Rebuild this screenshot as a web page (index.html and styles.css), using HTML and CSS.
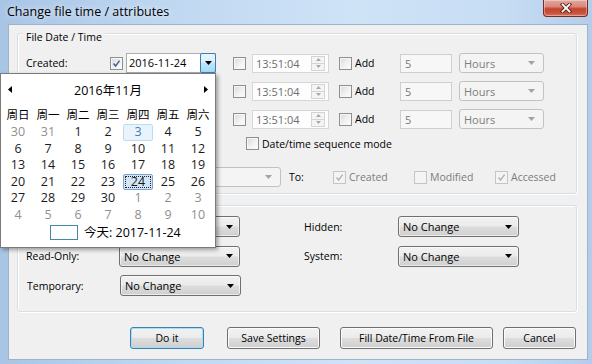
FILE: index.html
```html
<!DOCTYPE html>
<html>
<head>
<meta charset="utf-8">
<link rel="stylesheet" href="styles.css">
</head>
<body>
<div class="window">
  <div class="titlebar">
    <span class="title">Change file time / attributes</span>
    <div class="close">
      <svg width="14" height="10" viewBox="0 0 14 10"><path d="M3.5 1.5 L10.5 8.5 M10.5 1.5 L3.5 8.5" stroke="#5a1d16" stroke-width="3.6" stroke-linecap="square"/><path d="M3.5 1.5 L10.5 8.5 M10.5 1.5 L3.5 8.5" stroke="#fff" stroke-width="1.8" stroke-linecap="square"/></svg>
    </div>
  </div>
  <div class="frame">
    <div class="client">
      <div class="group g1">
        <div class="caption">File Date / Time</div>

        <div class="dtrow first">
          <span class="lbl">Created:</span>
          <span class="cb on"><svg viewBox="0 0 11 11"><path d="M2.5 5.5 L4.6 8 L8.6 2.6"/></svg></span>
          <div class="date"><span class="dtext">2016-11-24</span><span class="dbtn hot"><svg width="7" height="4" viewBox="0 0 7 4"><path d="M0 0H7L3.5 4Z"/></svg></span></div>
          <span class="cb mid"></span>
          <div class="time"><span>13:51:04</span><span class="spin"><span class="sp"><svg width="5" height="3" viewBox="0 0 5 3"><path d="M0 3H5L2.5 0Z"/></svg></span><span class="sp"><svg width="5" height="3" viewBox="0 0 5 3"><path d="M0 0H5L2.5 3Z"/></svg></span></span></div>
          <span class="cb add-cb"></span><span class="add">Add</span>
          <div class="num">5</div>
          <div class="combo dis"><span>Hours</span><svg width="7" height="4" viewBox="0 0 7 4"><path d="M0 0H7L3.5 4Z"/></svg></div>
        </div>

        <div class="dtrow">
          <span class="lbl"></span>
          <span class="cb on"></span>
          <div class="date"><span class="dtext"></span><span class="dbtn"></span></div>
          <span class="cb mid"></span>
          <div class="time"><span>13:51:04</span><span class="spin"><span class="sp"><svg width="5" height="3" viewBox="0 0 5 3"><path d="M0 3H5L2.5 0Z"/></svg></span><span class="sp"><svg width="5" height="3" viewBox="0 0 5 3"><path d="M0 0H5L2.5 3Z"/></svg></span></span></div>
          <span class="cb add-cb"></span><span class="add">Add</span>
          <div class="num">5</div>
          <div class="combo dis"><span>Hours</span><svg width="7" height="4" viewBox="0 0 7 4"><path d="M0 0H7L3.5 4Z"/></svg></div>
        </div>

        <div class="dtrow">
          <span class="lbl"></span>
          <span class="cb on"></span>
          <div class="date"><span class="dtext"></span><span class="dbtn"></span></div>
          <span class="cb mid"></span>
          <div class="time"><span>13:51:04</span><span class="spin"><span class="sp"><svg width="5" height="3" viewBox="0 0 5 3"><path d="M0 3H5L2.5 0Z"/></svg></span><span class="sp"><svg width="5" height="3" viewBox="0 0 5 3"><path d="M0 0H5L2.5 3Z"/></svg></span></span></div>
          <span class="cb add-cb"></span><span class="add">Add</span>
          <div class="num">5</div>
          <div class="combo dis"><span>Hours</span><svg width="7" height="4" viewBox="0 0 7 4"><path d="M0 0H7L3.5 4Z"/></svg></div>
        </div>

        <div class="seqrow">
          <span class="cb"></span><span class="cbtext">Date/time sequence mode</span>
        </div>

        <div class="torow">
          <span class="lbl"></span>
          <div class="combo dis wide"><span></span><svg width="7" height="4" viewBox="0 0 7 4"><path d="M0 0H7L3.5 4Z"/></svg></div>
          <span class="to">To:</span>
          <span class="chk"><span class="cb dis on"><svg viewBox="0 0 11 11"><path d="M2.5 5.5 L4.6 8 L8.6 2.6"/></svg></span><span class="cbtext gray">Created</span></span>
          <span class="chk"><span class="cb dis"></span><span class="cbtext gray">Modified</span></span>
          <span class="chk"><span class="cb dis on"><svg viewBox="0 0 11 11"><path d="M2.5 5.5 L4.6 8 L8.6 2.6"/></svg></span><span class="cbtext gray">Accessed</span></span>
        </div>
      </div>

      <div class="group g2">
        <div class="caption blank"></div>
        <div class="attrs">
          <span class="lbl"></span>
          <div class="combo"><span></span><svg width="7" height="4" viewBox="0 0 7 4"><path d="M0 0H7L3.5 4Z"/></svg></div>
          <span></span>
          <span class="lbl">Hidden:</span>
          <div class="combo"><span>No Change</span><svg width="7" height="4" viewBox="0 0 7 4"><path d="M0 0H7L3.5 4Z"/></svg></div>

          <span class="lbl">Read-Only:</span>
          <div class="combo"><span>No Change</span><svg width="7" height="4" viewBox="0 0 7 4"><path d="M0 0H7L3.5 4Z"/></svg></div>
          <span></span>
          <span class="lbl">System:</span>
          <div class="combo"><span>No Change</span><svg width="7" height="4" viewBox="0 0 7 4"><path d="M0 0H7L3.5 4Z"/></svg></div>

          <span class="lbl temp">Temporary:</span>
          <div class="combo temp"><span>No Change</span><svg width="7" height="4" viewBox="0 0 7 4"><path d="M0 0H7L3.5 4Z"/></svg></div>
        </div>
      </div>

      <div class="buttons">
        <button class="btn default b1">Do it</button>
        <button class="btn b2">Save Settings</button>
        <button class="btn b3">Fill Date/Time From File</button>
        <button class="btn b4">Cancel</button>
      </div>
    </div>
  </div>

  <div class="cal">
    <div class="cal-head">
      <svg width="4" height="7" viewBox="0 0 4 7"><path d="M4 0V7L0 3.5Z"/></svg>
      <span class="cal-title">2016年11月</span>
      <svg width="4" height="7" viewBox="0 0 4 7"><path d="M0 0V7L4 3.5Z"/></svg>
    </div>
    <div class="cal-week">
      <span>周日</span><span>周一</span><span>周二</span><span>周三</span><span>周四</span><span>周五</span><span>周六</span>
    </div>
    <div class="cal-days">
      <span class="o">30</span><span class="o">31</span><span>1</span><span>2</span><span class="hl">3</span><span>4</span><span>5</span>
      <span>6</span><span>7</span><span>8</span><span>9</span><span>10</span><span>11</span><span>12</span>
      <span>13</span><span>14</span><span>15</span><span>16</span><span>17</span><span>18</span><span>19</span>
      <span>20</span><span>21</span><span>22</span><span>23</span><span class="sel">24</span><span>25</span><span>26</span>
      <span>27</span><span>28</span><span>29</span><span>30</span><span class="o">1</span><span class="o">2</span><span class="o">3</span>
      <span class="o">4</span><span class="o">5</span><span class="o">6</span><span class="o">7</span><span class="o">8</span><span class="o">9</span><span class="o">10</span>
    </div>
    <div class="cal-today"><span class="todaybox"></span><span class="todaytext">今天: 2017-11-24</span></div>
  </div>
</div>
</body>
</html>
```
FILE: styles.css
```css
* { box-sizing: border-box; }
html, body { margin: 0; padding: 0; }
body {
  width: 592px;
  height: 364px;
  overflow: hidden;
  font-family: "Open Sans", "Noto Sans", sans-serif;
  font-size: 10.5px;
  color: #000;
}
.window {
  position: relative;
  width: 592px;
  height: 364px;
  display: flex;
  flex-direction: column;
  background: linear-gradient(to right, #a8c5e6 0%, #bdd6f0 25%, #cfe3f7 60%, #c7ddf4 85%, #b3cdea 100%);
}
.titlebar {
  height: 24px;
  display: flex;
  align-items: flex-start;
  padding: 0 4px 0 7px;
}
.title {
  font-size: 12.5px;
  line-height: 24px;
  color: #000;
  text-shadow: 0 0 6px rgba(255,255,255,0.9);
}
.close {
  margin-left: auto;
  width: 45px;
  height: 17px;
  border: 1px solid #7a2a22;
  border-top: none;
  border-radius: 0 0 4px 4px;
  background: linear-gradient(#e3a79d 0%, #d98a7d 40%, #c4452f 55%, #c9503a 80%, #d8735f 100%);
  box-shadow: inset 0 0 0 1px rgba(255,255,255,0.35);
  display: flex;
  align-items: center;
  justify-content: center;
}
.frame {
  flex: 1;
  display: flex;
  padding: 0 6px 4px 8px;
}
.client {
  flex: 1;
  background: #f0f0f0;
  border: 1px solid #9fb2c8;
  padding: 8px 10px 0 8px;
}
.group {
  border: 1px solid #d5dfe5;
  border-radius: 3px;
  box-shadow: inset 1px 1px 0 #fff, 1px 1px 0 #fff;
  padding-left: 8px;
}
.caption {
  width: fit-content;
  margin: -3px 0 0 -3px;
  padding: 0 3px;
  height: 13px;
  line-height: 13px;
  background: #f0f0f0;
}
.caption.blank { width: 60px; }
.g1 { padding-bottom: 6px; }
.g2 { margin-top: 11px; padding-bottom: 15px; }

/* checkboxes */
.cb {
  display: inline-flex;
  width: 13px;
  height: 13px;
  flex: none;
  border: 1px solid #8e8f8f;
  background: linear-gradient(135deg, #d6dadf 0%, #f2f3f4 60%, #fdfdfd 100%);
  box-shadow: inset 0 0 0 1px #f6f6f6;
}
.cb svg { width: 11px; height: 11px; }
.cb svg path { fill: none; stroke: #4b5f8a; stroke-width: 1.5; }
.cb.dis {
  border-color: #c5c5c5;
  background: #f4f4f4;
  box-shadow: none;
}
.cb.dis svg path { stroke: #b5b5b5; }
.cbtext { margin-left: 3px; white-space: nowrap; }
.gray { color: #7d7d7d; }

/* date rows */
.dtrow {
  display: flex;
  align-items: center;
  height: 20px;
  margin-top: 8px;
}
.dtrow.first { margin-top: 9px; }
.lbl { white-space: nowrap; }
.dtrow .lbl { width: 84px; flex: none; }
.dtrow > .cb.on { margin-right: 3px; }
.date {
  width: 90px;
  height: 20px;
  flex: none;
  display: flex;
  border: 1px solid #abadb3;
  border-right: none;
  background: #fff;
}
.dtext { flex: 1; padding-left: 2px; line-height: 18px; font-size: 11px; }
.dbtn {
  width: 16px;
  height: 20px;
  margin-top: -1px;
  border: 1px solid #3c7fb1;
  border-radius: 2px;
  background: linear-gradient(#eaf6fd 0%, #d9f0fc 45%, #bee6fd 50%, #a7d9f5 100%);
  display: flex;
  align-items: center;
  justify-content: center;
}
.dbtn svg path { fill: #000; }
.cb.mid { margin-left: 17px; }
.time {
  width: 77px;
  height: 19px;
  flex: none;
  margin-left: 6px;
  border: 1px solid #d6d6d6;
  background: #fdfdfd;
  color: #6d6d6d;
  display: flex;
  align-items: center;
  padding-left: 3px;
  font-size: 11px;
}
.spin {
  margin-left: auto;
  margin-right: 3px;
  width: 14px;
  height: 15px;
  display: flex;
  flex-direction: column;
}
.sp {
  flex: 1;
  border: 1px solid #d4d4d4;
  background: #f4f4f4;
  display: flex;
  align-items: center;
  justify-content: center;
}
.sp + .sp { border-top: none; }
.sp svg path { fill: #a9a9a9; }
.add-cb { margin-left: 10px; }
.add { width: 48px; flex: none; padding-left: 3px; }
.num {
  width: 52px;
  height: 19px;
  flex: none;
  border: 1px solid #cfcfcf;
  background: #f7f7f7;
  color: #7a7a7a;
  padding-left: 4px;
  line-height: 17px;
  font-size: 11px;
}

/* combos */
.combo {
  height: 21px;
  display: flex;
  align-items: center;
  justify-content: space-between;
  padding: 0 6px 0 4px;
  border: 1px solid #707070;
  border-radius: 3px;
  background: linear-gradient(#f2f2f2 0%, #ebebeb 48%, #dddddd 52%, #cfcfcf 100%);
  box-shadow: inset 0 0 0 1px rgba(255,255,255,0.6);
  font-size: 11px;
}
.combo svg path { fill: #000; }
.combo.dis {
  height: 20px;
  border-color: #c2c2c2;
  background: #f4f4f4;
  box-shadow: none;
  color: #7d7d7d;
  padding-right: 8px;
}
.combo.dis svg path { fill: #a3a3a3; }
.dtrow .combo { width: 85px; margin-left: 7px; flex: none; }
.dtrow .combo.dis { margin-left: 7px; }

.seqrow {
  display: flex;
  align-items: center;
  height: 13px;
  margin-top: 8px;
  padding-left: 220px;
}
.torow {
  display: flex;
  align-items: center;
  height: 20px;
  margin-top: 17px;
}
.torow .lbl { width: 100px; flex: none; }
.combo.wide { width: 155px; flex: none; }
.to { width: 44px; flex: none; margin-left: 8px; }
.chk { width: 81px; flex: none; display: flex; align-items: center; }

/* attributes */
.attrs {
  display: grid;
  grid-template-columns: 93px 121px 64px 94px 121px;
  grid-auto-rows: 21px;
  row-gap: 8.5px;
  align-items: center;
}
.attrs .temp { position: relative; left: 1px; }

/* buttons */
.buttons {
  display: flex;
  justify-content: flex-end;
  margin-top: 15px;
  padding-right: 1px;
}
.btn {
  height: 22px;
  border: 1px solid #707070;
  border-radius: 3px;
  background: linear-gradient(#f2f2f2 0%, #ebebeb 48%, #dddddd 52%, #cfcfcf 100%);
  box-shadow: inset 0 0 0 1px #fbfbfb;
  font-family: "Open Sans", sans-serif;
  font-size: 10.5px;
  color: #000;
  padding: 0;
}
.btn.default {
  border-color: #3c7fb1;
  box-shadow: inset 0 0 0 1px #a9dcf5;
}
.b1 { width: 74px; }
.b2 { width: 93px; margin-left: 23px; }
.b3 { width: 153px; margin-left: 20px; }
.b4 { width: 73px; margin-left: 10px; }

/* calendar popup */
.cal {
  position: absolute;
  left: 0;
  top: 73px;
  width: 216px;
  height: 175px;
  border: 1px solid #7b7b7b;
  background: #fff;
  box-shadow: 2px 2px 4px rgba(0,0,0,0.35);
  font-family: "Open Sans", "Noto Sans CJK SC", sans-serif;
  font-size: 12.5px;
  padding-top: 5px;
}
.cal-head {
  height: 20px;
  display: flex;
  align-items: center;
  justify-content: space-between;
  padding: 0 7px;
}
.cal-head svg path { fill: #000; }
.cal-title { font-size: 12.5px; }
.cal-week, .cal-days {
  display: grid;
  grid-template-columns: repeat(7, 30px);
  padding-left: 2px;
  text-align: center;
}
.cal-week {
  margin-top: 7px;
  height: 16px;
  line-height: 16px;
  font-size: 11.5px;
  font-family: "Noto Sans CJK SC", sans-serif;
}
.cal-days {
  margin-top: 2px;
  grid-auto-rows: 16.6px;
  line-height: 16.6px;
  color: #1a1a1a;
}
.cal-days .o { color: #8f8f8f; }
.cal-days .hl {
  background: #e8f3fc;
  border: 1px solid #bcdcf4;
  border-radius: 2px;
  color: #3f7fb5;
  line-height: 14.6px;
}
.cal-days .sel {
  background: #d3e6f9;
  border: 1px solid #7da2ce;
  border-radius: 2px;
  outline: 1px dotted #222;
  outline-offset: -3px;
  line-height: 14.6px;
}
.cal-today {
  display: flex;
  align-items: center;
  height: 15px;
  margin-top: 1.5px;
  padding-left: 49px;
}
.todaytext { line-height: 13px; }
.todaybox {
  width: 28px;
  height: 15px;
  border: 1px solid #3f8aa8;
  margin-right: 6px;
}
```
